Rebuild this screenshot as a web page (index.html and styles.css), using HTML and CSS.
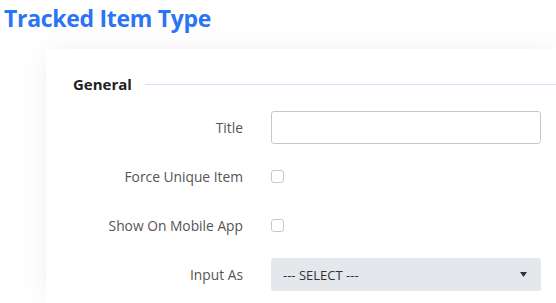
FILE: index.html
```html
<!DOCTYPE html>
<html lang="en">
<head>
    <meta charset="UTF-8">
    <meta name="viewport" content="width=device-width, initial-scale=1.0">
    <title>Tracked Item Type</title>
    <link rel="stylesheet" href="styles.css">
</head>
<body>
    <h1 class="page-title">Tracked Item Type</h1>

    <div class="card">
        <div class="section-head">
            <span>General</span>
            <div class="section-line"></div>
        </div>

        <div class="form-grid">
            <label class="form-label" for="title">Title</label>
            <div class="form-field"><input type="text" id="title" class="text-input"></div>

            <label class="form-label" for="unique">Force Unique Item</label>
            <div class="form-field"><input type="checkbox" id="unique" class="check"></div>

            <label class="form-label" for="mobile">Show On Mobile App</label>
            <div class="form-field"><input type="checkbox" id="mobile" class="check"></div>

            <label class="form-label" for="inputAs">Input As</label>
            <div class="form-field">
                <div class="select-box" id="inputAs">
                    <span>--- SELECT ---</span>
                    <svg width="7" height="5" viewBox="0 0 7 5"><path d="M0 0h7L3.5 5z" fill="#333"/></svg>
                </div>
            </div>
        </div>
    </div>
</body>
</html>
```

FILE: styles.css
```css
body {
    margin: 0;
    font-family: "Open Sans", "Noto Sans", sans-serif;
    background: #fff;
    overflow: hidden;
    width: 556px;
    height: 303px;
}
.page-title {
    margin: 0;
    padding: 4px 0 0 4px;
    font-size: 23px;
    line-height: 28px;
    font-weight: 700;
    color: #2a74f5;
    letter-spacing: -0.3px;
}
.card {
    margin: 17px 0 0 46px;
    width: 510px;
    height: 254px;
    background: #fff;
    box-shadow: 0 0 28px rgba(0, 0, 0, 0.06);
    padding: 25px 0 0 27px;
    box-sizing: border-box;
}
.section-head {
    display: flex;
    align-items: center;
    height: 20px;
    font-size: 15px;
    font-weight: 700;
    color: #222;
}
.section-line {
    flex: 1;
    height: 1px;
    background: #cfe0fb;
    margin-left: 13px;
}
.form-grid {
    display: grid;
    grid-template-columns: 170px 270px;
    column-gap: 28px;
    row-gap: 16px;
    margin-top: 17px;
    align-items: center;
}
.form-label {
    text-align: right;
    font-size: 13.8px;
    color: #555;
}
.form-field {
    height: 33px;
    display: flex;
    align-items: center;
}
.text-input {
    width: 100%;
    height: 33px;
    box-sizing: border-box;
    border: 1px solid #c8c8c8;
    border-radius: 3px;
    background: #fff;
    margin: 0;
}
.check {
    appearance: none;
    width: 13px;
    height: 13px;
    margin: 0;
    border: 1px solid #c8c8c8;
    border-radius: 3px;
    background: #fff;
}
.select-box {
    width: 100%;
    height: 33px;
    box-sizing: border-box;
    background: #e4e7eb;
    border-radius: 3px;
    display: flex;
    align-items: center;
    justify-content: space-between;
    padding: 0 14px 0 12px;
    font-size: 13px;
    color: #333;
}
```
